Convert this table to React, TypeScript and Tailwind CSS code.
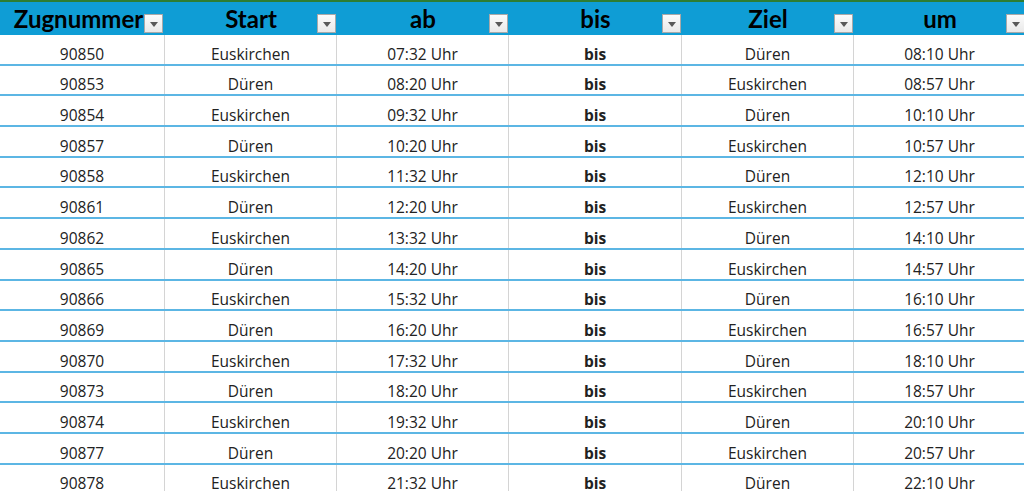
import React from 'react';

const cols = [
    { label: 'Zugnummer', w: 'w-[165px]' },
    { label: 'Start', w: 'w-[172px]' },
    { label: 'ab', w: 'w-[172px]' },
    { label: 'bis', w: 'w-[173px]' },
    { label: 'Ziel', w: 'w-[172px]' },
    { label: 'um', w: 'w-[172px]' },
];

const rows: [string, string, string, string, string][] = [
    ['90850', 'Euskirchen', '07:32 Uhr', 'Düren', '08:10 Uhr'],
    ['90853', 'Düren', '08:20 Uhr', 'Euskirchen', '08:57 Uhr'],
    ['90854', 'Euskirchen', '09:32 Uhr', 'Düren', '10:10 Uhr'],
    ['90857', 'Düren', '10:20 Uhr', 'Euskirchen', '10:57 Uhr'],
    ['90858', 'Euskirchen', '11:32 Uhr', 'Düren', '12:10 Uhr'],
    ['90861', 'Düren', '12:20 Uhr', 'Euskirchen', '12:57 Uhr'],
    ['90862', 'Euskirchen', '13:32 Uhr', 'Düren', '14:10 Uhr'],
    ['90865', 'Düren', '14:20 Uhr', 'Euskirchen', '14:57 Uhr'],
    ['90866', 'Euskirchen', '15:32 Uhr', 'Düren', '16:10 Uhr'],
    ['90869', 'Düren', '16:20 Uhr', 'Euskirchen', '16:57 Uhr'],
    ['90870', 'Euskirchen', '17:32 Uhr', 'Düren', '18:10 Uhr'],
    ['90873', 'Düren', '18:20 Uhr', 'Euskirchen', '18:57 Uhr'],
    ['90874', 'Euskirchen', '19:32 Uhr', 'Düren', '20:10 Uhr'],
    ['90877', 'Düren', '20:20 Uhr', 'Euskirchen', '20:57 Uhr'],
    ['90878', 'Euskirchen', '21:32 Uhr', 'Düren', '22:10 Uhr'],
];

function FilterButton({ right }: { right: string }) {
    return (
        <div
            className={`absolute top-[12px] ${right} w-[19px] h-[19px] border border-[#a9a9a9] bg-gradient-to-b from-[#fbfbfb] to-[#e9e9e9] flex items-center justify-center`}
        >
            <svg width="8" height="5" viewBox="0 0 8 5" className="mt-[2px]">
                <path d="M0 0 H8 L4 5 Z" fill="#595959" />
            </svg>
        </div>
    );
}

export default function App() {
    return (
        <div className="w-[1024px] h-[491px] overflow-hidden bg-white font-['Open_Sans',sans-serif]">
            <div className="w-[1026px] border-t-2 border-[#2e7d32]">
                <div className="flex h-[33px] bg-[#0f9dd5]">
                    {cols.map((c, i) => (
                        <div key={c.label} className={`relative ${c.w} shrink-0 flex items-center justify-center`}>
                            <span
                                className={`font-['Lato',sans-serif] font-bold text-[24px] leading-none text-black ${i === 0 ? '-ml-[8px]' : ''}`}
                            >
                                {c.label}
                            </span>
                            <FilterButton right={i === 0 ? 'right-[2px]' : 'right-[1px]'} />
                        </div>
                    ))}
                </div>
                {rows.map((r) => (
                    <div key={r[0]} className="flex h-[30.7px] border-b-2 border-[#5cb6e4]">
                        {[r[0], r[1], r[2], 'bis', r[3], r[4]].map((v, i) => (
                            <div
                                key={i}
                                className={`${cols[i].w} shrink-0 border-r border-[#d4d4d4] flex items-end justify-center text-[15.5px] leading-[19px] text-[#222222] ${i === 3 ? 'font-bold' : ''}`}
                            >
                                {v}
                            </div>
                        ))}
                    </div>
                ))}
            </div>
        </div>
    );
}
